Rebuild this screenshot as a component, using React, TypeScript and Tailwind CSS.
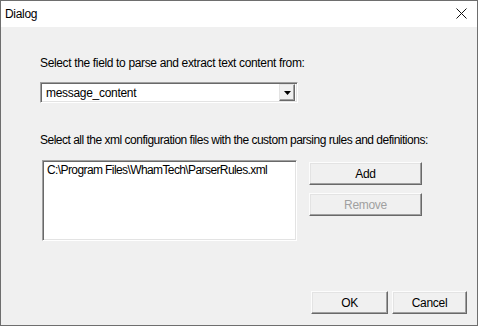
const font = "font-['Segoe_UI','Liberation_Sans',sans-serif]";

function Button({ label, disabled = false }: { label: string; disabled?: boolean }) {
  return (
    <div
      className={`flex h-[23px] items-center justify-center border border-t-[#fcfcfc] border-l-[#fcfcfc] border-r-[#696969] border-b-[#696969] bg-[#f0f0f0] shadow-[inset_-1px_-1px_0_#a0a0a0,inset_1px_1px_0_#e3e3e3] text-[12px] tracking-[-0.3px] ${
        disabled ? "text-[#a0a0a0]" : "text-black"
      }`}
    >
      {label}
    </div>
  );
}

export default function App() {
  return (
    <div className={`flex h-[326px] w-[478px] flex-col border border-[#6e6e6e] bg-[#f0f0f0] ${font} text-[12px] text-black`}>
      {/* title bar */}
      <div className="flex h-[26px] items-center justify-between bg-white pl-[4px] pr-[10px]">
        <span className="text-[12px] leading-none tracking-[-0.3px]">Dialog</span>
        <svg width="11" height="11" viewBox="0 0 11 11" className="mb-[1px]">
          <path d="M0.5 0.5 L10.5 10.5 M10.5 0.5 L0.5 10.5" stroke="#111" strokeWidth="1" />
        </svg>
      </div>

      <div className="flex flex-1 flex-col pl-[39px] pr-[10px]">
        <div className="mt-[29px] whitespace-nowrap leading-[15px] tracking-[-0.35px]">
          Select the field to parse and extract text content from:
        </div>

        <div className="mt-[11px] flex h-[21px] w-[258px] items-center border border-t-[#a0a0a0] border-l-[#a0a0a0] border-r-white border-b-white bg-white shadow-[inset_1px_1px_0_#696969,inset_-1px_-1px_0_#e3e3e3]">
          <span className="flex-1 pl-[5px] leading-none tracking-[-0.3px]">message_content</span>
          <div className="mr-[2px] flex h-[17px] w-[16px] items-center justify-center border border-t-[#e3e3e3] border-l-[#e3e3e3] border-r-[#696969] border-b-[#696969] bg-[#f0f0f0] shadow-[inset_-1px_-1px_0_#a0a0a0]">
            <svg width="7" height="4" viewBox="0 0 7 4">
              <path d="M0 0 H7 L3.5 4 Z" fill="#000" />
            </svg>
          </div>
        </div>

        <div className="mt-[30px] whitespace-nowrap leading-[15px] tracking-[-0.5px]">
          Select all the xml configuration files with the custom parsing rules and definitions:
        </div>

        <div className="mt-[12px] flex gap-[12px] pl-[2px]">
          <div className="h-[81px] w-[255px] border border-t-[#a0a0a0] border-l-[#a0a0a0] border-r-white border-b-white bg-white pl-[3px] pt-[1px] shadow-[inset_1px_1px_0_#696969,inset_-1px_-1px_0_#e3e3e3]">
            <div className="pl-[1px] pt-[1px] leading-[14px] tracking-[-0.6px]">
              C:\Program Files\WhamTech\ParserRules.xml
            </div>
          </div>
          <div className="flex w-[113px] flex-col gap-[8px] pt-[2px]">
            <Button label="Add" />
            <Button label="Remove" disabled />
          </div>
        </div>

        <div className="mt-auto mb-[11px] flex justify-end gap-[4px]">
          <div className="w-[77px]">
            <Button label="OK" />
          </div>
          <div className="w-[75px]">
            <Button label="Cancel" />
          </div>
        </div>
      </div>
    </div>
  );
}
